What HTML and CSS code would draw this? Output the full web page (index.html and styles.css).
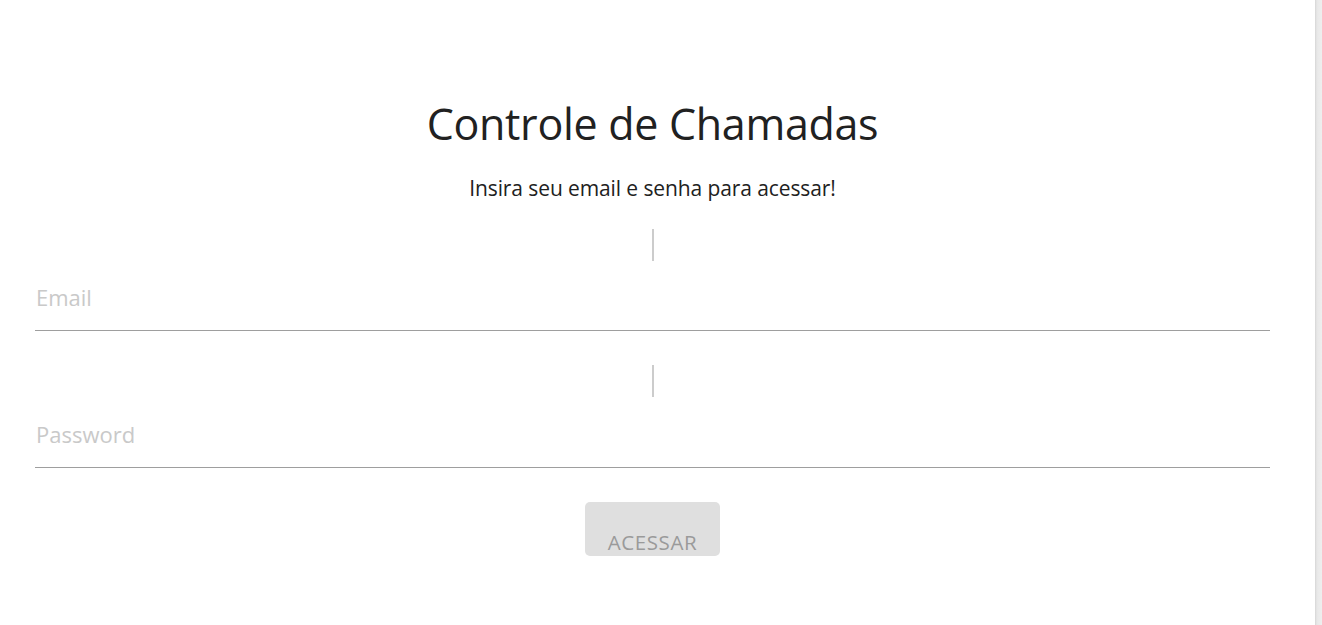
FILE: index.html
```html
<!DOCTYPE html>
<html lang="pt-BR">
<head>
<meta charset="utf-8">
<title>Controle de Chamadas</title>
<link rel="stylesheet" href="styles.css">
</head>
<body>
<main class="page">
  <h1 class="title">Controle de Chamadas</h1>
  <p class="subtitle">Insira seu email e senha para acessar!</p>
  <form class="form">
    <div class="field">
      <span class="divider"></span>
      <input class="input" type="email" placeholder="Email">
    </div>
    <div class="field">
      <span class="divider"></span>
      <input class="input input-last" type="password" placeholder="Password">
    </div>
    <button class="btn" type="button" disabled>ACESSAR</button>
  </form>
</main>
<div class="scrollbar"></div>
</body>
</html>
```
FILE: styles.css
```css
html, body {
  margin: 0;
  padding: 0;
  background: #ffffff;
}
body {
  font-family: "Open Sans", "Noto Sans", sans-serif;
  color: #212121;
}
.page {
  width: 1235px;
  margin-left: 35px;
  padding-top: 96px;
}
.title {
  margin: 0;
  text-align: center;
  font-weight: 400;
  font-size: 43px;
  line-height: 56px;
  letter-spacing: -0.3px;
  color: #212121;
}
.subtitle {
  margin: 22px 0 0;
  text-align: center;
  font-size: 21px;
  line-height: 28px;
  letter-spacing: -0.1px;
  color: #212121;
}
.form {
  display: flex;
  flex-direction: column;
  margin-top: 27px;
}
.field {
  display: flex;
  flex-direction: column;
}
.field + .field {
  margin-top: 34px;
}
.divider {
  display: block;
  align-self: center;
  width: 2px;
  height: 32px;
  background: #cccccc;
}
.input {
  display: block;
  box-sizing: border-box;
  width: 100%;
  height: 70px;
  margin: 0;
  padding: 2px 1px 0;
  border: none;
  border-bottom: 1px solid #9e9e9e;
  outline: none;
  background: transparent;
  font-family: "Open Sans", "Noto Sans", sans-serif;
  font-size: 22px;
  color: #212121;
}
.input-last {
  height: 71px;
  padding-top: 3px;
}
.input::placeholder {
  color: #c9c9c9;
}
.btn {
  align-self: center;
  box-sizing: border-box;
  width: 135px;
  height: 54px;
  margin-top: 34px;
  padding: 26px 0 0;
  border: none;
  border-radius: 5px;
  background: #dfdfdf;
  color: #9a9a9a;
  font-family: "Open Sans", "Noto Sans", sans-serif;
  font-size: 20.5px;
  line-height: 20px;
  letter-spacing: 0.6px;
}
.scrollbar {
  position: fixed;
  top: 0;
  right: 0;
  bottom: 0;
  width: 7px;
  background: linear-gradient(to right, #d6d6d6, #e8e8e8 2px, #efefef);
}
```
